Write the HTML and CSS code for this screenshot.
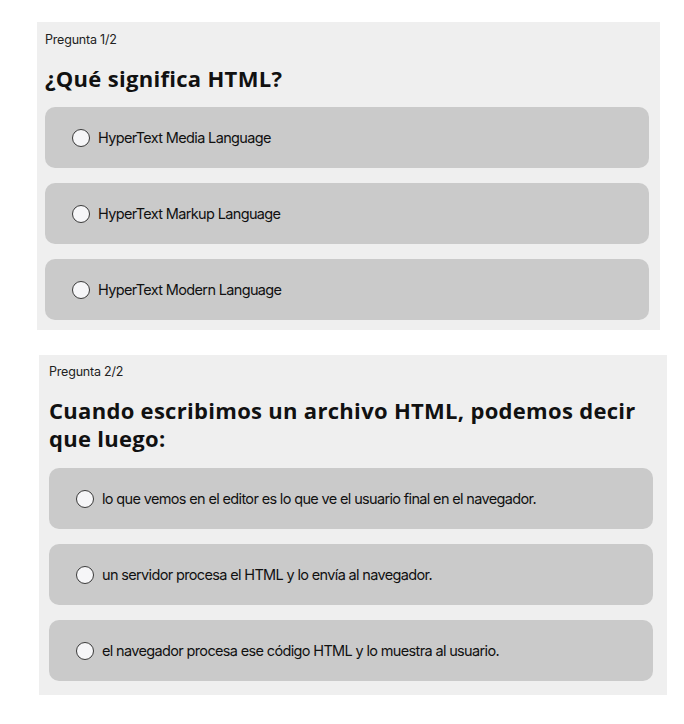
FILE: index.html
```html
<!DOCTYPE html>
<html lang="es">
<head>
<meta charset="utf-8">
<title>Quiz</title>
<link rel="stylesheet" href="styles.css">
</head>
<body>
<main class="page">
  <section class="card card-one">
    <p class="count">Pregunta 1/2</p>
    <h2 class="question">¿Qué significa HTML?</h2>
    <div class="options">
      <label class="option"><span class="radio"></span><span class="text">HyperText Media Language</span></label>
      <label class="option"><span class="radio"></span><span class="text">HyperText Markup Language</span></label>
      <label class="option"><span class="radio"></span><span class="text">HyperText Modern Language</span></label>
    </div>
  </section>
  <section class="card card-two">
    <p class="count">Pregunta 2/2</p>
    <h2 class="question">Cuando escribimos un archivo HTML, podemos decir que luego:</h2>
    <div class="options">
      <label class="option"><span class="radio"></span><span class="text">lo que vemos en el editor es lo que ve el usuario final en el navegador.</span></label>
      <label class="option"><span class="radio"></span><span class="text">un servidor procesa el HTML y lo envía al navegador.</span></label>
      <label class="option"><span class="radio"></span><span class="text">el navegador procesa ese código HTML y lo muestra al usuario.</span></label>
    </div>
  </section>
</main>
</body>
</html>
```

FILE: styles.css
```css
* { box-sizing: border-box; }
html, body { margin: 0; padding: 0; background: #ffffff; }
body {
  font-family: Inter, "Liberation Sans", sans-serif;
  color: #151515;
}
.page {
  display: flex;
  flex-direction: column;
  gap: 25px;
  padding-top: 22px;
}
.card {
  background: #efefef;
  display: flex;
  flex-direction: column;
}
.card-one {
  margin-left: 37px;
  width: 623px;
  padding: 10px 11px 10px 8px;
}
.card-two {
  margin-left: 39px;
  width: 628px;
  padding: 9px 14px 14px 10px;
}
.count {
  margin: 0;
  font-size: 12.5px;
  line-height: 16px;
  letter-spacing: -0.2px;
  color: #222;
}
.question {
  margin: 16px 0 15px;
  font-family: "Open Sans", sans-serif;
  font-weight: 700;
  font-size: 22px;
  line-height: 28px;
  letter-spacing: 0.3px;
  color: #111;
}
.card-two .question { margin-bottom: 16px; }
.options {
  display: flex;
  flex-direction: column;
  gap: 15px;
}
.option {
  display: flex;
  align-items: center;
  gap: 8px;
  height: 61px;
  padding-left: 27px;
  background: #cacaca;
  border-radius: 10px;
}
.radio {
  width: 18px;
  height: 18px;
  border-radius: 50%;
  background: #f6f6f8;
  border: 1px solid #3a3a3a;
  flex: none;
}
.text {
  font-size: 14.5px;
  letter-spacing: -0.65px;
  color: #111;
}
```
